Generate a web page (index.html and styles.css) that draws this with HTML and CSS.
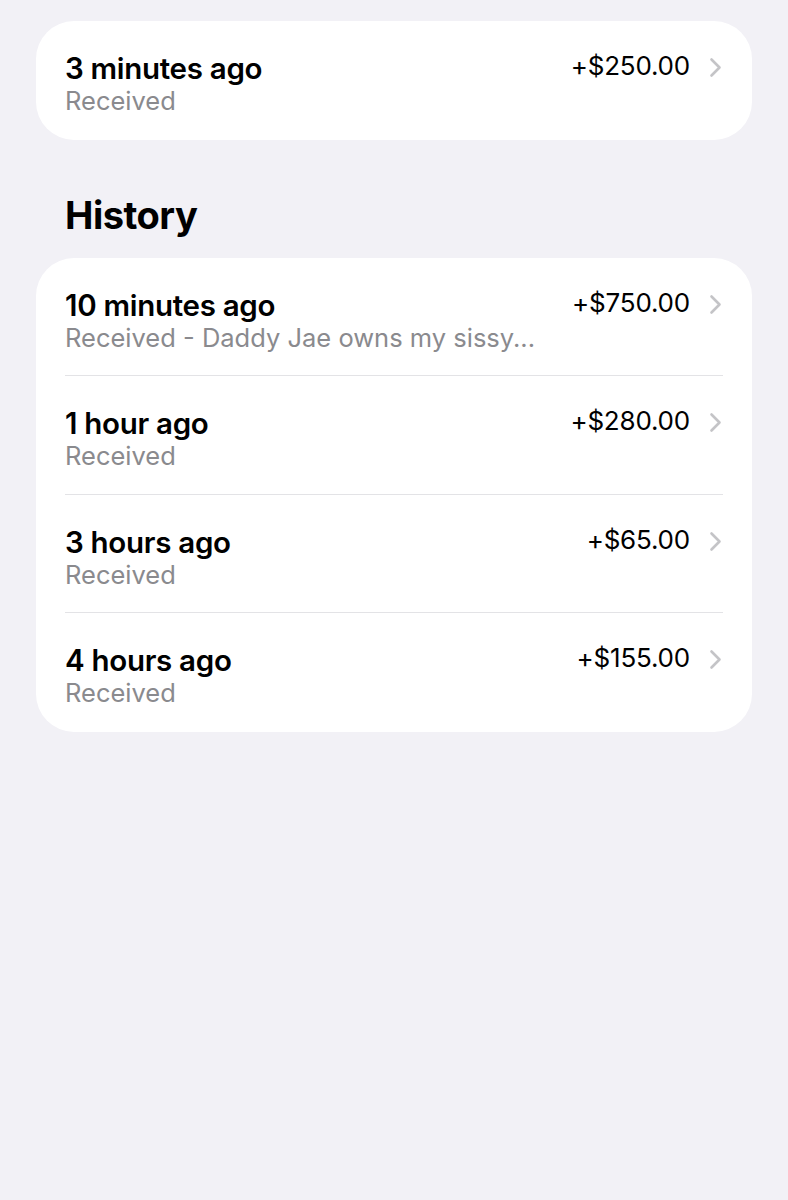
FILE: index.html
```html
<!DOCTYPE html>
<html lang="en">
<head>
    <meta charset="UTF-8">
    <meta name="viewport" content="width=device-width, initial-scale=1.0">
    <title>Transactions</title>
    <link rel="stylesheet" href="styles.css">
</head>
<body>
    <div class="page">
        <div class="card">
            <div class="row">
                <div class="row-text">
                    <div class="title">3 minutes ago</div>
                    <div class="sub">Received</div>
                </div>
                <div class="amount">+$250.00</div>
                <svg class="chevron" width="13" height="21" viewBox="0 0 13 21"><path d="M2.5 2.5 L10.5 10.5 L2.5 18.5" fill="none" stroke="#c4c4c7" stroke-width="2.6" stroke-linecap="round" stroke-linejoin="round"/></svg>
            </div>
        </div>

        <h2 class="section-title">History</h2>

        <div class="card">
            <div class="row">
                <div class="row-text">
                    <div class="title">10 minutes ago</div>
                    <div class="sub">Received - Daddy Jae owns my sissy...</div>
                </div>
                <div class="amount">+$750.00</div>
                <svg class="chevron" width="13" height="21" viewBox="0 0 13 21"><path d="M2.5 2.5 L10.5 10.5 L2.5 18.5" fill="none" stroke="#c4c4c7" stroke-width="2.6" stroke-linecap="round" stroke-linejoin="round"/></svg>
            </div>
            <div class="row">
                <div class="row-text">
                    <div class="title">1 hour ago</div>
                    <div class="sub">Received</div>
                </div>
                <div class="amount">+$280.00</div>
                <svg class="chevron" width="13" height="21" viewBox="0 0 13 21"><path d="M2.5 2.5 L10.5 10.5 L2.5 18.5" fill="none" stroke="#c4c4c7" stroke-width="2.6" stroke-linecap="round" stroke-linejoin="round"/></svg>
            </div>
            <div class="row">
                <div class="row-text">
                    <div class="title">3 hours ago</div>
                    <div class="sub">Received</div>
                </div>
                <div class="amount">+$65.00</div>
                <svg class="chevron" width="13" height="21" viewBox="0 0 13 21"><path d="M2.5 2.5 L10.5 10.5 L2.5 18.5" fill="none" stroke="#c4c4c7" stroke-width="2.6" stroke-linecap="round" stroke-linejoin="round"/></svg>
            </div>
            <div class="row">
                <div class="row-text">
                    <div class="title">4 hours ago</div>
                    <div class="sub">Received</div>
                </div>
                <div class="amount">+$155.00</div>
                <svg class="chevron" width="13" height="21" viewBox="0 0 13 21"><path d="M2.5 2.5 L10.5 10.5 L2.5 18.5" fill="none" stroke="#c4c4c7" stroke-width="2.6" stroke-linecap="round" stroke-linejoin="round"/></svg>
            </div>
        </div>
    </div>
</body>
</html>
```

FILE: styles.css
```css
html, body {
    margin: 0;
    padding: 0;
    background: #f2f1f6;
}
body {
    font-family: Inter, "Noto Sans", "Liberation Sans", sans-serif;
    color: #000;
    min-height: 1200px;
}
.page {
    padding: 21px 36px 0 36px;
}
.card {
    background: #fff;
    border-radius: 38px;
    padding: 0 29px;
}
.row {
    display: flex;
    align-items: flex-start;
    height: 118.5px;
    box-sizing: border-box;
    padding: 30px 1px 0 0;
    border-bottom: 1.5px solid #e3e3e6;
}
.row:last-child {
    border-bottom: none;
}
.row-text {
    flex: 1;
    min-width: 0;
}
.title {
    font-size: 29.5px;
    font-weight: 600;
    line-height: 35px;
    letter-spacing: -0.3px;
}
.sub {
    font-size: 25.5px;
    line-height: 30px;
    color: #8a8a8e;
    white-space: nowrap;
}
.amount {
    font-size: 26px;
    line-height: 30px;
    letter-spacing: -0.2px;
}
.chevron {
    margin: 6px 0 0 19px;
}
.section-title {
    margin: 52px 0 20px 29px;
    font-size: 38px;
    font-weight: 700;
    line-height: 46px;
    letter-spacing: -0.5px;
}
```
